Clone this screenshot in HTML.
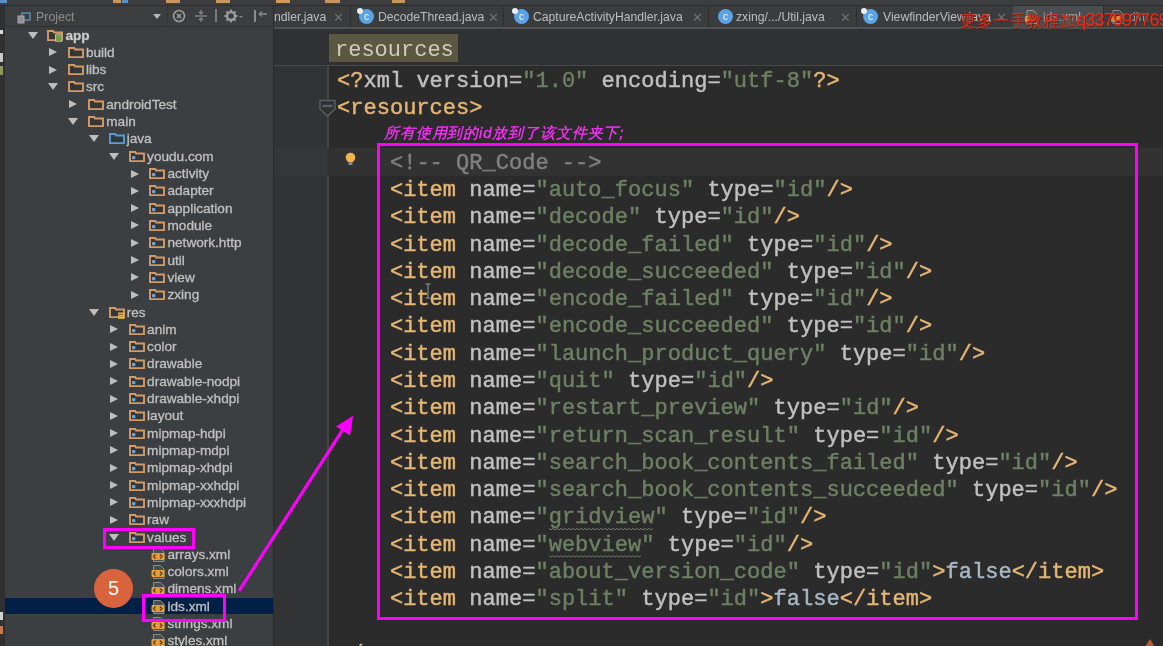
<!DOCTYPE html>
<html><head><meta charset="utf-8">
<style>
*{margin:0;padding:0;box-sizing:border-box}
html,body{width:1163px;height:646px;overflow:hidden;background:#2b2b2b}
body{position:relative;font-family:"Liberation Sans",sans-serif}
.abs{position:absolute}
#topstrip{position:absolute;left:0;top:0;width:1163px;height:6px;background:#3b3d3f;border-bottom:1px solid #2c2e30}
#lstrip{position:absolute;left:0;top:6px;width:5px;height:640px;background:#2e3032}
#panel{position:absolute;left:5px;top:6px;width:268px;height:640px;background:#3c3f41}
#phead{position:absolute;left:5px;top:6px;width:268px;height:21px;background:#3b3d3f;border-bottom:1px solid #2e3032}
#divider{position:absolute;left:273px;top:6px;width:1px;height:640px;background:#2b2b2b}
#tabbar{position:absolute;left:274px;top:6px;width:889px;height:22px;background:#3a3c3e}
#tabline{position:absolute;left:274px;top:27px;width:889px;height:2px;background:#4e5154}
#crumb{position:absolute;left:274px;top:29px;width:889px;height:37px;background:#303133;border-bottom:1px solid #47484a}
#gutter{position:absolute;left:274px;top:66px;width:53px;height:580px;background:#313335}
#gline{position:absolute;left:327px;top:66px;width:1.5px;height:580px;background:#434547}
#curline{position:absolute;left:274px;top:148px;width:889px;height:28px;background:#323232}
#curgut{position:absolute;left:274px;top:148px;width:53px;height:28px;background:#343638}
.tri{position:absolute;width:0;height:0}
.tri.down{border-left:5px solid transparent;border-right:5px solid transparent;border-top:7px solid #bdbdbd}
.tri.right{border-top:4.2px solid transparent;border-bottom:4.2px solid transparent;border-left:8px solid #bdbdbd}
.ico{position:absolute;line-height:0}
.tt{position:absolute;font-size:13.6px;line-height:18px;color:#c0c0c0;white-space:pre;-webkit-text-stroke:0.3px #c0c0c0}
.tt.b{font-weight:bold;color:#d0d0d0}
#sel{position:absolute;left:5px;top:597.5px;width:268px;height:16px;background:#021f45}
.cl{position:absolute;left:337px;height:27.3px;font-family:"Liberation Mono",monospace;font-size:22px;line-height:27.3px;white-space:pre;letter-spacing:0.025px;-webkit-text-stroke:0.45px currentColor}
.t{color:#e6b672}.a{color:#c0c0c0}.v{color:#6d8062}.c{color:#808080}.f{color:#a9b7c6}.p{color:transparent}
.tab{position:absolute;top:6px;height:22px;font-size:12.2px;line-height:22px;color:#bdbdbd;white-space:pre}
.tsep{position:absolute;top:6px;width:1px;height:21px;background:#2d2f31}
.tx{position:absolute;top:10px;font-size:13px;color:#707070}
.cico{position:absolute;top:9px;width:15px;height:15px;border-radius:50%;background:#5aa3e6;color:#fff;font-size:10px;line-height:15px;text-align:center}
#rbox{position:absolute;left:329px;top:34px;width:129px;height:28px;background:#5b5741}
#rtext{position:absolute;left:335px;top:37px;font-family:"Liberation Mono",monospace;font-size:22px;line-height:28px;color:#cfcbbf;white-space:pre}
.mag{position:absolute;border:3.5px solid #ff00ff}
#note{position:absolute;left:384px;top:123.5px;font-size:15px;line-height:18px;color:#ff30ff;font-style:italic;white-space:pre;letter-spacing:0.85px;-webkit-text-stroke:0.3px #ff30ff}
#circle{position:absolute;left:94px;top:569px;width:39px;height:39px;border-radius:50%;background:#d9633c;color:#fff;font-size:20px;line-height:39px;text-align:center}
#wm{position:absolute;left:960px;top:9px;font-family:"Liberation Serif",serif;font-size:16px;line-height:22px;color:#e02a1a;white-space:pre;letter-spacing:0.6px;text-shadow:0.6px 0.6px 0 #6a2010}
#wm b{font-family:"Liberation Sans",sans-serif;font-weight:normal;font-size:18px;letter-spacing:-0.85px;color:#ee2a1a}
</style></head><body><div id="root" style="position:absolute;left:0;top:0;width:1163px;height:646px;filter:blur(0.35px);will-change:transform">
<div id="topstrip"></div>
<div id="lstrip"></div>
<div id="panel"></div>
<div id="phead"></div>
<div id="divider"></div>
<div id="tabbar"></div>
<div id="tabline"></div>
<div id="crumb"></div>
<div id="gutter"></div>
<div id="gline"></div>
<div id="curline"></div>
<div id="curgut"></div>
<div id="sel"></div>
<div class="abs" style="left:0px;top:0;width:7px;height:2.5px;background:#5a8fc4"></div><div class="abs" style="left:113px;top:0;width:8px;height:2.5px;background:#c9955e"></div><div class="abs" style="left:122px;top:0;width:6px;height:2.5px;background:#5a8fc4"></div><div class="abs" style="left:166px;top:0;width:14px;height:2.5px;background:#c9955e"></div><div class="abs" style="left:216px;top:0;width:14px;height:2.5px;background:#c9955e"></div><div class="abs" style="left:276px;top:0;width:14px;height:2.5px;background:#d19a55"></div><div class="abs" style="left:325px;top:0;width:15px;height:2.5px;background:#c9955e"></div><div class="abs" style="left:392px;top:0;width:13px;height:2.5px;background:#c9955e"></div><div class="abs" style="left:0;top:30px;width:3px;height:4px;background:#d8d8d8"></div><div class="abs" style="left:0;top:53px;width:3px;height:9px;background:#c8c8c8"></div><div class="abs" style="left:0;top:66px;width:3px;height:9px;background:#8f9a5a"></div><div class="abs" style="left:0;top:612px;width:3px;height:8px;background:#d0d0d0"></div><div class="abs" style="left:0;top:626px;width:3px;height:8px;background:#c87a4a"></div>

<!-- panel header -->
<div class="abs" style="left:17px;top:10px;width:14px;height:12px">
<svg width="14" height="12" viewBox="0 0 14 12"><rect x="5" y="1" width="8" height="7" fill="none" stroke="#5e8fbf" stroke-width="1.4"/><rect x="1" y="4" width="6" height="7" fill="#8d9196" stroke="#aaa" stroke-width="1"/></svg></div>
<div class="abs" style="left:36px;top:9px;font-size:12.4px;line-height:16px;color:#8d8d8d">Project</div>
<div class="abs" style="left:153px;top:14px;width:0;height:0;border-left:4.5px solid transparent;border-right:4.5px solid transparent;border-top:5px solid #b5b5b5"></div>
<div class="abs" style="left:167px;top:6px;width:1px;height:20px;background:#333537"></div>
<div class="abs" style="left:172px;top:9px"><svg width="14" height="14" viewBox="0 0 14 14"><circle cx="7" cy="7" r="5.5" fill="none" stroke="#9a9a9a" stroke-width="1.6"/><path d="M5 5l4 4M9 5l-4 4" stroke="#9a9a9a" stroke-width="1.6"/></svg></div>
<div class="abs" style="left:194px;top:9px"><svg width="14" height="14" viewBox="0 0 14 14"><path d="M1 7h12M7 1v3M7 10v3M5 3l2 2 2-2M5 11l2-2 2 2" fill="none" stroke="#7d7d7d" stroke-width="1.5"/></svg></div>
<div class="abs" style="left:215px;top:9px;width:2px;height:13px;background:#7a7a7a"></div>
<div class="abs" style="left:224px;top:9px"><svg width="20" height="14" viewBox="0 0 20 14"><circle cx="7" cy="7" r="4" fill="none" stroke="#9a9a9a" stroke-width="2.4"/><path d="M7 0.5v2.5M7 11v2.5M0.5 7h2.5M11 7h2.5M2.4 2.4l1.8 1.8M9.8 9.8l1.8 1.8M2.4 11.6l1.8-1.8M9.8 4.2l1.8-1.8" stroke="#9a9a9a" stroke-width="1.8"/><path d="M15 7l2 2 2-2z" fill="#888"/></svg></div>
<div class="abs" style="left:253px;top:9px"><svg width="16" height="14" viewBox="0 0 16 14"><rect x="1" y="1" width="2" height="12" fill="#8a8a8a"/><path d="M6 5h8M6 5l3-2.5M6 5l3 2.5" fill="none" stroke="#8a8a8a" stroke-width="1.3"/></svg></div>

<div class="tri down" style="left:27.5px;top:31.5px"></div><div class="ico" style="left:47.3px;top:29.5px"><svg width="16" height="12" viewBox="0 0 16 12"><path d="M1 1h5.2l0.8 1.5h8v7.6H1z" fill="#34373a" stroke="#d39a66" stroke-width="1.9" stroke-linejoin="miter"/><rect x="8.5" y="4" width="6.5" height="8" rx="1" fill="#7d9a45" stroke="#b9b9b9" stroke-width="1"/></svg></div><div class="tt b" style="left:65.5px;top:26.5px">app</div>
<div class="tri right" style="left:48.9px;top:48.3px"></div><div class="ico" style="left:67.7px;top:46.8px"><svg width="16" height="12" viewBox="0 0 16 12"><path d="M1 1h5.2l0.8 1.5h8v7.6H1z" fill="#34373a" stroke="#d39a66" stroke-width="1.9" stroke-linejoin="miter"/></svg></div><div class="tt" style="left:85.9px;top:43.8px">build</div>
<div class="tri right" style="left:48.9px;top:65.6px"></div><div class="ico" style="left:67.7px;top:64.1px"><svg width="16" height="12" viewBox="0 0 16 12"><path d="M1 1h5.2l0.8 1.5h8v7.6H1z" fill="#34373a" stroke="#d39a66" stroke-width="1.9" stroke-linejoin="miter"/></svg></div><div class="tt" style="left:85.9px;top:61.1px">libs</div>
<div class="tri down" style="left:47.9px;top:83.4px"></div><div class="ico" style="left:67.7px;top:81.4px"><svg width="16" height="12" viewBox="0 0 16 12"><path d="M1 1h5.2l0.8 1.5h8v7.6H1z" fill="#34373a" stroke="#d39a66" stroke-width="1.9" stroke-linejoin="miter"/></svg></div><div class="tt" style="left:85.9px;top:78.4px">src</div>
<div class="tri right" style="left:69.3px;top:100.2px"></div><div class="ico" style="left:88.1px;top:98.7px"><svg width="16" height="12" viewBox="0 0 16 12"><path d="M1 1h5.2l0.8 1.5h8v7.6H1z" fill="#34373a" stroke="#d39a66" stroke-width="1.9" stroke-linejoin="miter"/></svg></div><div class="tt" style="left:106.3px;top:95.7px">androidTest</div>
<div class="tri down" style="left:68.3px;top:118.0px"></div><div class="ico" style="left:88.1px;top:116.0px"><svg width="16" height="12" viewBox="0 0 16 12"><path d="M1 1h5.2l0.8 1.5h8v7.6H1z" fill="#34373a" stroke="#d39a66" stroke-width="1.9" stroke-linejoin="miter"/></svg></div><div class="tt" style="left:106.3px;top:113.0px">main</div>
<div class="tri down" style="left:88.7px;top:135.4px"></div><div class="ico" style="left:108.5px;top:133.4px"><svg width="16" height="12" viewBox="0 0 16 12"><path d="M1 1h5.2l0.8 1.5h8v7.6H1z" fill="#34373a" stroke="#5a9bd6" stroke-width="1.9" stroke-linejoin="miter"/></svg></div><div class="tt" style="left:126.7px;top:130.4px">java</div>
<div class="tri down" style="left:109.1px;top:152.7px"></div><div class="ico" style="left:128.9px;top:150.7px"><svg width="16" height="12" viewBox="0 0 16 12"><path d="M1 1h5.2l0.8 1.5h8v7.6H1z" fill="#34373a" stroke="#d39a66" stroke-width="1.9" stroke-linejoin="miter"/><rect x="3" y="5" width="3.4" height="3.2" rx="1" fill="#6aa6da"/></svg></div><div class="tt" style="left:147.1px;top:147.7px">youdu.com</div>
<div class="tri right" style="left:130.5px;top:169.5px"></div><div class="ico" style="left:149.3px;top:168.0px"><svg width="16" height="12" viewBox="0 0 16 12"><path d="M1 1h5.2l0.8 1.5h8v7.6H1z" fill="#34373a" stroke="#d39a66" stroke-width="1.9" stroke-linejoin="miter"/><rect x="3" y="5" width="3.4" height="3.2" rx="1" fill="#6aa6da"/></svg></div><div class="tt" style="left:167.5px;top:165.0px">activity</div>
<div class="tri right" style="left:130.5px;top:186.8px"></div><div class="ico" style="left:149.3px;top:185.3px"><svg width="16" height="12" viewBox="0 0 16 12"><path d="M1 1h5.2l0.8 1.5h8v7.6H1z" fill="#34373a" stroke="#d39a66" stroke-width="1.9" stroke-linejoin="miter"/><rect x="3" y="5" width="3.4" height="3.2" rx="1" fill="#6aa6da"/></svg></div><div class="tt" style="left:167.5px;top:182.3px">adapter</div>
<div class="tri right" style="left:130.5px;top:204.1px"></div><div class="ico" style="left:149.3px;top:202.6px"><svg width="16" height="12" viewBox="0 0 16 12"><path d="M1 1h5.2l0.8 1.5h8v7.6H1z" fill="#34373a" stroke="#d39a66" stroke-width="1.9" stroke-linejoin="miter"/><rect x="3" y="5" width="3.4" height="3.2" rx="1" fill="#6aa6da"/></svg></div><div class="tt" style="left:167.5px;top:199.6px">application</div>
<div class="tri right" style="left:130.5px;top:221.4px"></div><div class="ico" style="left:149.3px;top:219.9px"><svg width="16" height="12" viewBox="0 0 16 12"><path d="M1 1h5.2l0.8 1.5h8v7.6H1z" fill="#34373a" stroke="#d39a66" stroke-width="1.9" stroke-linejoin="miter"/><rect x="3" y="5" width="3.4" height="3.2" rx="1" fill="#6aa6da"/></svg></div><div class="tt" style="left:167.5px;top:216.9px">module</div>
<div class="tri right" style="left:130.5px;top:238.7px"></div><div class="ico" style="left:149.3px;top:237.2px"><svg width="16" height="12" viewBox="0 0 16 12"><path d="M1 1h5.2l0.8 1.5h8v7.6H1z" fill="#34373a" stroke="#d39a66" stroke-width="1.9" stroke-linejoin="miter"/><rect x="3" y="5" width="3.4" height="3.2" rx="1" fill="#6aa6da"/></svg></div><div class="tt" style="left:167.5px;top:234.2px">network.http</div>
<div class="tri right" style="left:130.5px;top:256.0px"></div><div class="ico" style="left:149.3px;top:254.5px"><svg width="16" height="12" viewBox="0 0 16 12"><path d="M1 1h5.2l0.8 1.5h8v7.6H1z" fill="#34373a" stroke="#d39a66" stroke-width="1.9" stroke-linejoin="miter"/><rect x="3" y="5" width="3.4" height="3.2" rx="1" fill="#6aa6da"/></svg></div><div class="tt" style="left:167.5px;top:251.5px">util</div>
<div class="tri right" style="left:130.5px;top:273.3px"></div><div class="ico" style="left:149.3px;top:271.8px"><svg width="16" height="12" viewBox="0 0 16 12"><path d="M1 1h5.2l0.8 1.5h8v7.6H1z" fill="#34373a" stroke="#d39a66" stroke-width="1.9" stroke-linejoin="miter"/><rect x="3" y="5" width="3.4" height="3.2" rx="1" fill="#6aa6da"/></svg></div><div class="tt" style="left:167.5px;top:268.8px">view</div>
<div class="tri right" style="left:130.5px;top:290.6px"></div><div class="ico" style="left:149.3px;top:289.1px"><svg width="16" height="12" viewBox="0 0 16 12"><path d="M1 1h5.2l0.8 1.5h8v7.6H1z" fill="#34373a" stroke="#d39a66" stroke-width="1.9" stroke-linejoin="miter"/><rect x="3" y="5" width="3.4" height="3.2" rx="1" fill="#6aa6da"/></svg></div><div class="tt" style="left:167.5px;top:286.1px">zxing</div>
<div class="tri down" style="left:88.7px;top:308.5px"></div><div class="ico" style="left:108.5px;top:306.5px"><svg width="16" height="12" viewBox="0 0 16 12"><path d="M1 1h5.2l0.8 1.5h8v7.6H1z" fill="#34373a" stroke="#d39a66" stroke-width="1.9" stroke-linejoin="miter"/><rect x="9" y="5.5" width="6.5" height="1.8" fill="#eab22c"/><rect x="9" y="7.8" width="6.5" height="1.8" fill="#eab22c"/><rect x="9" y="10.1" width="6.5" height="1.8" fill="#eab22c"/></svg></div><div class="tt" style="left:126.7px;top:303.5px">res</div>
<div class="tri right" style="left:110.1px;top:325.3px"></div><div class="ico" style="left:128.9px;top:323.8px"><svg width="16" height="12" viewBox="0 0 16 12"><path d="M1 1h5.2l0.8 1.5h8v7.6H1z" fill="#34373a" stroke="#d39a66" stroke-width="1.9" stroke-linejoin="miter"/><rect x="3" y="5" width="3.4" height="3.2" rx="1" fill="#6aa6da"/></svg></div><div class="tt" style="left:147.1px;top:320.8px">anim</div>
<div class="tri right" style="left:110.1px;top:342.6px"></div><div class="ico" style="left:128.9px;top:341.1px"><svg width="16" height="12" viewBox="0 0 16 12"><path d="M1 1h5.2l0.8 1.5h8v7.6H1z" fill="#34373a" stroke="#d39a66" stroke-width="1.9" stroke-linejoin="miter"/><rect x="3" y="5" width="3.4" height="3.2" rx="1" fill="#6aa6da"/></svg></div><div class="tt" style="left:147.1px;top:338.1px">color</div>
<div class="tri right" style="left:110.1px;top:359.9px"></div><div class="ico" style="left:128.9px;top:358.4px"><svg width="16" height="12" viewBox="0 0 16 12"><path d="M1 1h5.2l0.8 1.5h8v7.6H1z" fill="#34373a" stroke="#d39a66" stroke-width="1.9" stroke-linejoin="miter"/><rect x="3" y="5" width="3.4" height="3.2" rx="1" fill="#6aa6da"/></svg></div><div class="tt" style="left:147.1px;top:355.4px">drawable</div>
<div class="tri right" style="left:110.1px;top:377.2px"></div><div class="ico" style="left:128.9px;top:375.7px"><svg width="16" height="12" viewBox="0 0 16 12"><path d="M1 1h5.2l0.8 1.5h8v7.6H1z" fill="#34373a" stroke="#d39a66" stroke-width="1.9" stroke-linejoin="miter"/><rect x="3" y="5" width="3.4" height="3.2" rx="1" fill="#6aa6da"/></svg></div><div class="tt" style="left:147.1px;top:372.7px">drawable-nodpi</div>
<div class="tri right" style="left:110.1px;top:394.5px"></div><div class="ico" style="left:128.9px;top:393.0px"><svg width="16" height="12" viewBox="0 0 16 12"><path d="M1 1h5.2l0.8 1.5h8v7.6H1z" fill="#34373a" stroke="#d39a66" stroke-width="1.9" stroke-linejoin="miter"/><rect x="3" y="5" width="3.4" height="3.2" rx="1" fill="#6aa6da"/></svg></div><div class="tt" style="left:147.1px;top:390.0px">drawable-xhdpi</div>
<div class="tri right" style="left:110.1px;top:411.8px"></div><div class="ico" style="left:128.9px;top:410.3px"><svg width="16" height="12" viewBox="0 0 16 12"><path d="M1 1h5.2l0.8 1.5h8v7.6H1z" fill="#34373a" stroke="#d39a66" stroke-width="1.9" stroke-linejoin="miter"/><rect x="3" y="5" width="3.4" height="3.2" rx="1" fill="#6aa6da"/></svg></div><div class="tt" style="left:147.1px;top:407.3px">layout</div>
<div class="tri right" style="left:110.1px;top:429.1px"></div><div class="ico" style="left:128.9px;top:427.6px"><svg width="16" height="12" viewBox="0 0 16 12"><path d="M1 1h5.2l0.8 1.5h8v7.6H1z" fill="#34373a" stroke="#d39a66" stroke-width="1.9" stroke-linejoin="miter"/><rect x="3" y="5" width="3.4" height="3.2" rx="1" fill="#6aa6da"/></svg></div><div class="tt" style="left:147.1px;top:424.6px">mipmap-hdpi</div>
<div class="tri right" style="left:110.1px;top:446.4px"></div><div class="ico" style="left:128.9px;top:444.9px"><svg width="16" height="12" viewBox="0 0 16 12"><path d="M1 1h5.2l0.8 1.5h8v7.6H1z" fill="#34373a" stroke="#d39a66" stroke-width="1.9" stroke-linejoin="miter"/><rect x="3" y="5" width="3.4" height="3.2" rx="1" fill="#6aa6da"/></svg></div><div class="tt" style="left:147.1px;top:441.9px">mipmap-mdpi</div>
<div class="tri right" style="left:110.1px;top:463.7px"></div><div class="ico" style="left:128.9px;top:462.2px"><svg width="16" height="12" viewBox="0 0 16 12"><path d="M1 1h5.2l0.8 1.5h8v7.6H1z" fill="#34373a" stroke="#d39a66" stroke-width="1.9" stroke-linejoin="miter"/><rect x="3" y="5" width="3.4" height="3.2" rx="1" fill="#6aa6da"/></svg></div><div class="tt" style="left:147.1px;top:459.2px">mipmap-xhdpi</div>
<div class="tri right" style="left:110.1px;top:481.1px"></div><div class="ico" style="left:128.9px;top:479.6px"><svg width="16" height="12" viewBox="0 0 16 12"><path d="M1 1h5.2l0.8 1.5h8v7.6H1z" fill="#34373a" stroke="#d39a66" stroke-width="1.9" stroke-linejoin="miter"/><rect x="3" y="5" width="3.4" height="3.2" rx="1" fill="#6aa6da"/></svg></div><div class="tt" style="left:147.1px;top:476.6px">mipmap-xxhdpi</div>
<div class="tri right" style="left:110.1px;top:498.4px"></div><div class="ico" style="left:128.9px;top:496.9px"><svg width="16" height="12" viewBox="0 0 16 12"><path d="M1 1h5.2l0.8 1.5h8v7.6H1z" fill="#34373a" stroke="#d39a66" stroke-width="1.9" stroke-linejoin="miter"/><rect x="3" y="5" width="3.4" height="3.2" rx="1" fill="#6aa6da"/></svg></div><div class="tt" style="left:147.1px;top:493.9px">mipmap-xxxhdpi</div>
<div class="tri right" style="left:110.1px;top:515.7px"></div><div class="ico" style="left:128.9px;top:514.2px"><svg width="16" height="12" viewBox="0 0 16 12"><path d="M1 1h5.2l0.8 1.5h8v7.6H1z" fill="#34373a" stroke="#d39a66" stroke-width="1.9" stroke-linejoin="miter"/><rect x="3" y="5" width="3.4" height="3.2" rx="1" fill="#6aa6da"/></svg></div><div class="tt" style="left:147.1px;top:511.2px">raw</div>
<div class="tri down" style="left:109.1px;top:533.5px"></div><div class="ico" style="left:128.9px;top:531.5px"><svg width="16" height="12" viewBox="0 0 16 12"><path d="M1 1h5.2l0.8 1.5h8v7.6H1z" fill="#34373a" stroke="#d39a66" stroke-width="1.9" stroke-linejoin="miter"/><rect x="3" y="5" width="3.4" height="3.2" rx="1" fill="#6aa6da"/></svg></div><div class="tt" style="left:147.1px;top:528.5px">values</div>
<div class="ico" style="left:151.0px;top:546.6px"><svg width="16" height="16" viewBox="0 0 16 16"><path d="M2.5 1.5h7l3.5 3.5v9.5h-10.5z" fill="#4a4d50" stroke="#8c8c8c" stroke-width="1"/><rect x="0.5" y="6" width="13" height="7" rx="1" fill="#e39d3a"/><path d="M4.5 7.5l-2 2 2 2M9 7.5l2 2-2 2" fill="none" stroke="#5a3a10" stroke-width="1.2"/></svg></div><div class="tt" style="left:167.5px;top:545.8px">arrays.xml</div>
<div class="ico" style="left:151.0px;top:563.9px"><svg width="16" height="16" viewBox="0 0 16 16"><path d="M2.5 1.5h7l3.5 3.5v9.5h-10.5z" fill="#4a4d50" stroke="#8c8c8c" stroke-width="1"/><rect x="0.5" y="6" width="13" height="7" rx="1" fill="#e39d3a"/><path d="M4.5 7.5l-2 2 2 2M9 7.5l2 2-2 2" fill="none" stroke="#5a3a10" stroke-width="1.2"/></svg></div><div class="tt" style="left:167.5px;top:563.1px">colors.xml</div>
<div class="ico" style="left:151.0px;top:581.2px"><svg width="16" height="16" viewBox="0 0 16 16"><path d="M2.5 1.5h7l3.5 3.5v9.5h-10.5z" fill="#4a4d50" stroke="#8c8c8c" stroke-width="1"/><rect x="0.5" y="6" width="13" height="7" rx="1" fill="#e39d3a"/><path d="M4.5 7.5l-2 2 2 2M9 7.5l2 2-2 2" fill="none" stroke="#5a3a10" stroke-width="1.2"/></svg></div><div class="tt" style="left:167.5px;top:580.4px">dimens.xml</div>
<div class="ico" style="left:151.0px;top:598.5px"><svg width="16" height="16" viewBox="0 0 16 16"><path d="M2.5 1.5h7l3.5 3.5v9.5h-10.5z" fill="#4a4d50" stroke="#8c8c8c" stroke-width="1"/><rect x="0.5" y="6" width="13" height="7" rx="1" fill="#e39d3a"/><path d="M4.5 7.5l-2 2 2 2M9 7.5l2 2-2 2" fill="none" stroke="#5a3a10" stroke-width="1.2"/></svg></div><div class="tt" style="left:167.5px;top:597.7px">ids.xml</div>
<div class="ico" style="left:151.0px;top:615.8px"><svg width="16" height="16" viewBox="0 0 16 16"><path d="M2.5 1.5h7l3.5 3.5v9.5h-10.5z" fill="#4a4d50" stroke="#8c8c8c" stroke-width="1"/><rect x="0.5" y="6" width="13" height="7" rx="1" fill="#e39d3a"/><path d="M4.5 7.5l-2 2 2 2M9 7.5l2 2-2 2" fill="none" stroke="#5a3a10" stroke-width="1.2"/></svg></div><div class="tt" style="left:167.5px;top:615.0px">strings.xml</div>
<div class="ico" style="left:151.0px;top:633.1px"><svg width="16" height="16" viewBox="0 0 16 16"><path d="M2.5 1.5h7l3.5 3.5v9.5h-10.5z" fill="#4a4d50" stroke="#8c8c8c" stroke-width="1"/><rect x="0.5" y="6" width="13" height="7" rx="1" fill="#e39d3a"/><path d="M4.5 7.5l-2 2 2 2M9 7.5l2 2-2 2" fill="none" stroke="#5a3a10" stroke-width="1.2"/></svg></div><div class="tt" style="left:167.5px;top:632.3px">styles.xml</div>

<!-- tabs -->
<div class="tab" style="left:274px">ndler.java</div>
<div class="tx" style="left:333px">&#x2715;</div>
<div class="tsep" style="left:350px"></div>
<div class="cico" style="left:359px">c</div><div class="abs" style="left:357px;top:8px;width:6px;height:6px;border-radius:50%;background:#e8eef4"></div>
<div class="tab" style="left:378px">DecodeThread.java</div>
<div class="tx" style="left:488px">&#x2715;</div>
<div class="tsep" style="left:503px"></div>
<div class="cico" style="left:514px">c</div><div class="abs" style="left:512px;top:8px;width:6px;height:6px;border-radius:50%;background:#e8eef4"></div>
<div class="tab" style="left:533px">CaptureActivityHandler.java</div>
<div class="tx" style="left:692px">&#x2715;</div>
<div class="tsep" style="left:708px"></div>
<div class="cico" style="left:718px">c</div>
<div class="tab" style="left:736px">zxing/.../Util.java</div>
<div class="tx" style="left:840px">&#x2715;</div>
<div class="tsep" style="left:856px"></div>
<div class="cico" style="left:863px">c</div><div class="abs" style="left:861px;top:8px;width:6px;height:6px;border-radius:50%;background:#e8eef4"></div>
<div class="tab" style="left:883px">ViewfinderView.java</div>
<div class="tx" style="left:996px">&#x2715;</div>
<div class="abs" style="left:1013px;top:6px;width:90px;height:21px;background:#4b4e51"></div>
<div class="abs" style="left:1024px;top:9px"><svg width="16" height="16" viewBox="0 0 16 16"><path d="M3 1.5h6.5l3.5 3.5v9.5H3z" fill="#55585b" stroke="#9a9a9a" stroke-width="1"/><rect x="1" y="7" width="10" height="6" rx="1" fill="#e39d3a"/></svg></div>
<div class="abs" style="left:1043px;top:6px;font-size:12.2px;line-height:22px;color:#a9abad;white-space:pre">ids.xml</div>
<div class="abs" style="left:1110px;top:9px"><svg width="16" height="16" viewBox="0 0 16 16"><path d="M3 1.5h6.5l3.5 3.5v9.5H3z" fill="#45484b" stroke="#8a8a8a" stroke-width="1"/><rect x="1" y="7" width="10" height="6" rx="1" fill="#c98a36"/></svg></div>
<div class="abs" style="left:1129px;top:6px;font-size:12.2px;line-height:22px;color:#9a9c9e;white-space:pre">dim</div>
<div class="tsep" style="left:1103px"></div>

<div id="wm">更多一手教程加<b>q337997769</b></div>

<!-- breadcrumb -->
<div id="rbox"></div>
<div id="rtext">resources</div>

<div class="cl" style="top:67.80px"><span class="t">&lt;?</span><span class="a">xml version=</span><span class="v">&quot;1.0&quot;</span><span class="a"> encoding=</span><span class="v">&quot;utf-8&quot;</span><span class="t">?&gt;</span></div>
<div class="cl" style="top:95.09px"><span class="t">&lt;resources&gt;</span></div>
<div class="cl" style="top:122.38px"></div>
<div class="cl" style="top:149.67px"><span class="p">    </span><span class="c">&lt;!-- QR_Code --&gt;</span></div>
<div class="cl" style="top:176.96px"><span class="t">    &lt;item</span><span class="a"> name=</span><span class="v">&quot;auto_focus&quot;</span><span class="a"> type=</span><span class="v">&quot;id&quot;</span><span class="t">/&gt;</span></div>
<div class="cl" style="top:204.25px"><span class="t">    &lt;item</span><span class="a"> name=</span><span class="v">&quot;decode&quot;</span><span class="a"> type=</span><span class="v">&quot;id&quot;</span><span class="t">/&gt;</span></div>
<div class="cl" style="top:231.54px"><span class="t">    &lt;item</span><span class="a"> name=</span><span class="v">&quot;decode_failed&quot;</span><span class="a"> type=</span><span class="v">&quot;id&quot;</span><span class="t">/&gt;</span></div>
<div class="cl" style="top:258.83px"><span class="t">    &lt;item</span><span class="a"> name=</span><span class="v">&quot;decode_succeeded&quot;</span><span class="a"> type=</span><span class="v">&quot;id&quot;</span><span class="t">/&gt;</span></div>
<div class="cl" style="top:286.12px"><span class="t">    &lt;item</span><span class="a"> name=</span><span class="v">&quot;encode_failed&quot;</span><span class="a"> type=</span><span class="v">&quot;id&quot;</span><span class="t">/&gt;</span></div>
<div class="cl" style="top:313.41px"><span class="t">    &lt;item</span><span class="a"> name=</span><span class="v">&quot;encode_succeeded&quot;</span><span class="a"> type=</span><span class="v">&quot;id&quot;</span><span class="t">/&gt;</span></div>
<div class="cl" style="top:340.70px"><span class="t">    &lt;item</span><span class="a"> name=</span><span class="v">&quot;launch_product_query&quot;</span><span class="a"> type=</span><span class="v">&quot;id&quot;</span><span class="t">/&gt;</span></div>
<div class="cl" style="top:367.99px"><span class="t">    &lt;item</span><span class="a"> name=</span><span class="v">&quot;quit&quot;</span><span class="a"> type=</span><span class="v">&quot;id&quot;</span><span class="t">/&gt;</span></div>
<div class="cl" style="top:395.28px"><span class="t">    &lt;item</span><span class="a"> name=</span><span class="v">&quot;restart_preview&quot;</span><span class="a"> type=</span><span class="v">&quot;id&quot;</span><span class="t">/&gt;</span></div>
<div class="cl" style="top:422.57px"><span class="t">    &lt;item</span><span class="a"> name=</span><span class="v">&quot;return_scan_result&quot;</span><span class="a"> type=</span><span class="v">&quot;id&quot;</span><span class="t">/&gt;</span></div>
<div class="cl" style="top:449.86px"><span class="t">    &lt;item</span><span class="a"> name=</span><span class="v">&quot;search_book_contents_failed&quot;</span><span class="a"> type=</span><span class="v">&quot;id&quot;</span><span class="t">/&gt;</span></div>
<div class="cl" style="top:477.15px"><span class="t">    &lt;item</span><span class="a"> name=</span><span class="v">&quot;search_book_contents_succeeded&quot;</span><span class="a"> type=</span><span class="v">&quot;id&quot;</span><span class="t">/&gt;</span></div>
<div class="cl" style="top:504.44px"><span class="t">    &lt;item</span><span class="a"> name=</span><span class="v">&quot;gridview&quot;</span><span class="a"> type=</span><span class="v">&quot;id&quot;</span><span class="t">/&gt;</span></div>
<div class="cl" style="top:531.73px"><span class="t">    &lt;item</span><span class="a"> name=</span><span class="v">&quot;webview&quot;</span><span class="a"> type=</span><span class="v">&quot;id&quot;</span><span class="t">/&gt;</span></div>
<div class="cl" style="top:559.02px"><span class="t">    &lt;item</span><span class="a"> name=</span><span class="v">&quot;about_version_code&quot;</span><span class="a"> type=</span><span class="v">&quot;id&quot;</span><span class="t">&gt;</span><span class="f">false</span><span class="t">&lt;/item&gt;</span></div>
<div class="cl" style="top:586.31px"><span class="t">    &lt;item</span><span class="a"> name=</span><span class="v">&quot;split&quot;</span><span class="a"> type=</span><span class="v">&quot;id&quot;</span><span class="t">&gt;</span><span class="f">false</span><span class="t">&lt;/item&gt;</span></div>
<div class="cl" style="top:613.60px"></div>
<div class="cl" style="top:640.89px"><span class="t">&lt;/resources&gt;</span></div>

<!-- gutter icons -->
<div class="abs" style="left:345px;top:152px"><svg width="11" height="14" viewBox="0 0 11 14"><circle cx="5.5" cy="5.5" r="4.8" fill="#f2b54e"/><rect x="3.5" y="10" width="4" height="3" fill="#8a8a80"/></svg></div>
<div class="abs" style="left:319px;top:99px"><svg width="17" height="18" viewBox="0 0 17 18"><path d="M1 1.5h15v8.5l-7.5 7-7.5-7z" fill="#2e3032" stroke="#5c5f62" stroke-width="1.4"/><path d="M3.5 7h10" stroke="#5c5f62" stroke-width="2.4"/></svg></div>

<svg class="abs" style="left:0;top:0" width="1163" height="646"><polyline points="549.0,528.3 551.0,529.9 553.0,528.3 555.0,529.9 557.0,528.3 559.0,529.9 561.0,528.3 563.0,529.9 565.0,528.3 567.0,529.9 569.0,528.3 571.0,529.9 573.0,528.3 575.0,529.9 577.0,528.3 579.0,529.9 581.0,528.3 583.0,529.9 585.0,528.3 587.0,529.9 589.0,528.3 591.0,529.9 593.0,528.3 595.0,529.9 597.0,528.3 599.0,529.9 601.0,528.3 603.0,529.9 605.0,528.3 607.0,529.9 609.0,528.3 611.0,529.9 613.0,528.3 615.0,529.9 617.0,528.3 619.0,529.9 621.0,528.3 623.0,529.9 625.0,528.3 627.0,529.9 629.0,528.3 631.0,529.9 633.0,528.3 635.0,529.9 637.0,528.3 639.0,529.9 641.0,528.3 643.0,529.9 645.0,528.3 647.0,529.9 649.0,528.3 651.0,529.9 653.0,528.3" fill="none" stroke="#76806f" stroke-width="0.9"/><polyline points="549.0,555.6 551.0,557.2 553.0,555.6 555.0,557.2 557.0,555.6 559.0,557.2 561.0,555.6 563.0,557.2 565.0,555.6 567.0,557.2 569.0,555.6 571.0,557.2 573.0,555.6 575.0,557.2 577.0,555.6 579.0,557.2 581.0,555.6 583.0,557.2 585.0,555.6 587.0,557.2 589.0,555.6 591.0,557.2 593.0,555.6 595.0,557.2 597.0,555.6 599.0,557.2 601.0,555.6 603.0,557.2 605.0,555.6 607.0,557.2 609.0,555.6 611.0,557.2 613.0,555.6 615.0,557.2 617.0,555.6 619.0,557.2 621.0,555.6 623.0,557.2 625.0,555.6 627.0,557.2 629.0,555.6 631.0,557.2 633.0,555.6 635.0,557.2 637.0,555.6 639.0,557.2 641.0,555.6" fill="none" stroke="#76806f" stroke-width="0.9"/><path d="M425.5 284h5M428 284v14M425.5 298h5" stroke="#9a9a9a" stroke-width="1"/></svg>
<!-- annotations -->
<div id="note">所有使用到的id放到了该文件夹下;</div>
<div class="mag" style="left:377px;top:143px;width:761px;height:477px"></div>
<div class="mag" style="left:103px;top:528px;width:92px;height:21px"></div>
<div class="mag" style="left:142px;top:594px;width:84px;height:28px"></div>
<svg class="abs" style="left:0;top:0" width="1163" height="646"><line x1="239" y1="591" x2="344.4" y2="427" stroke="#ff00ff" stroke-width="3.2"/><path d="M353.1 415.8L336.2 426.4L350 435.5z" fill="#ff00ff"/></svg>
<div id="circle">5</div>
<div class="abs" style="left:1145px;top:639px;width:0;height:0;border-left:5px solid transparent;border-right:5px solid transparent;border-bottom:8px solid #b85a3a"></div>
</div></body></html>
